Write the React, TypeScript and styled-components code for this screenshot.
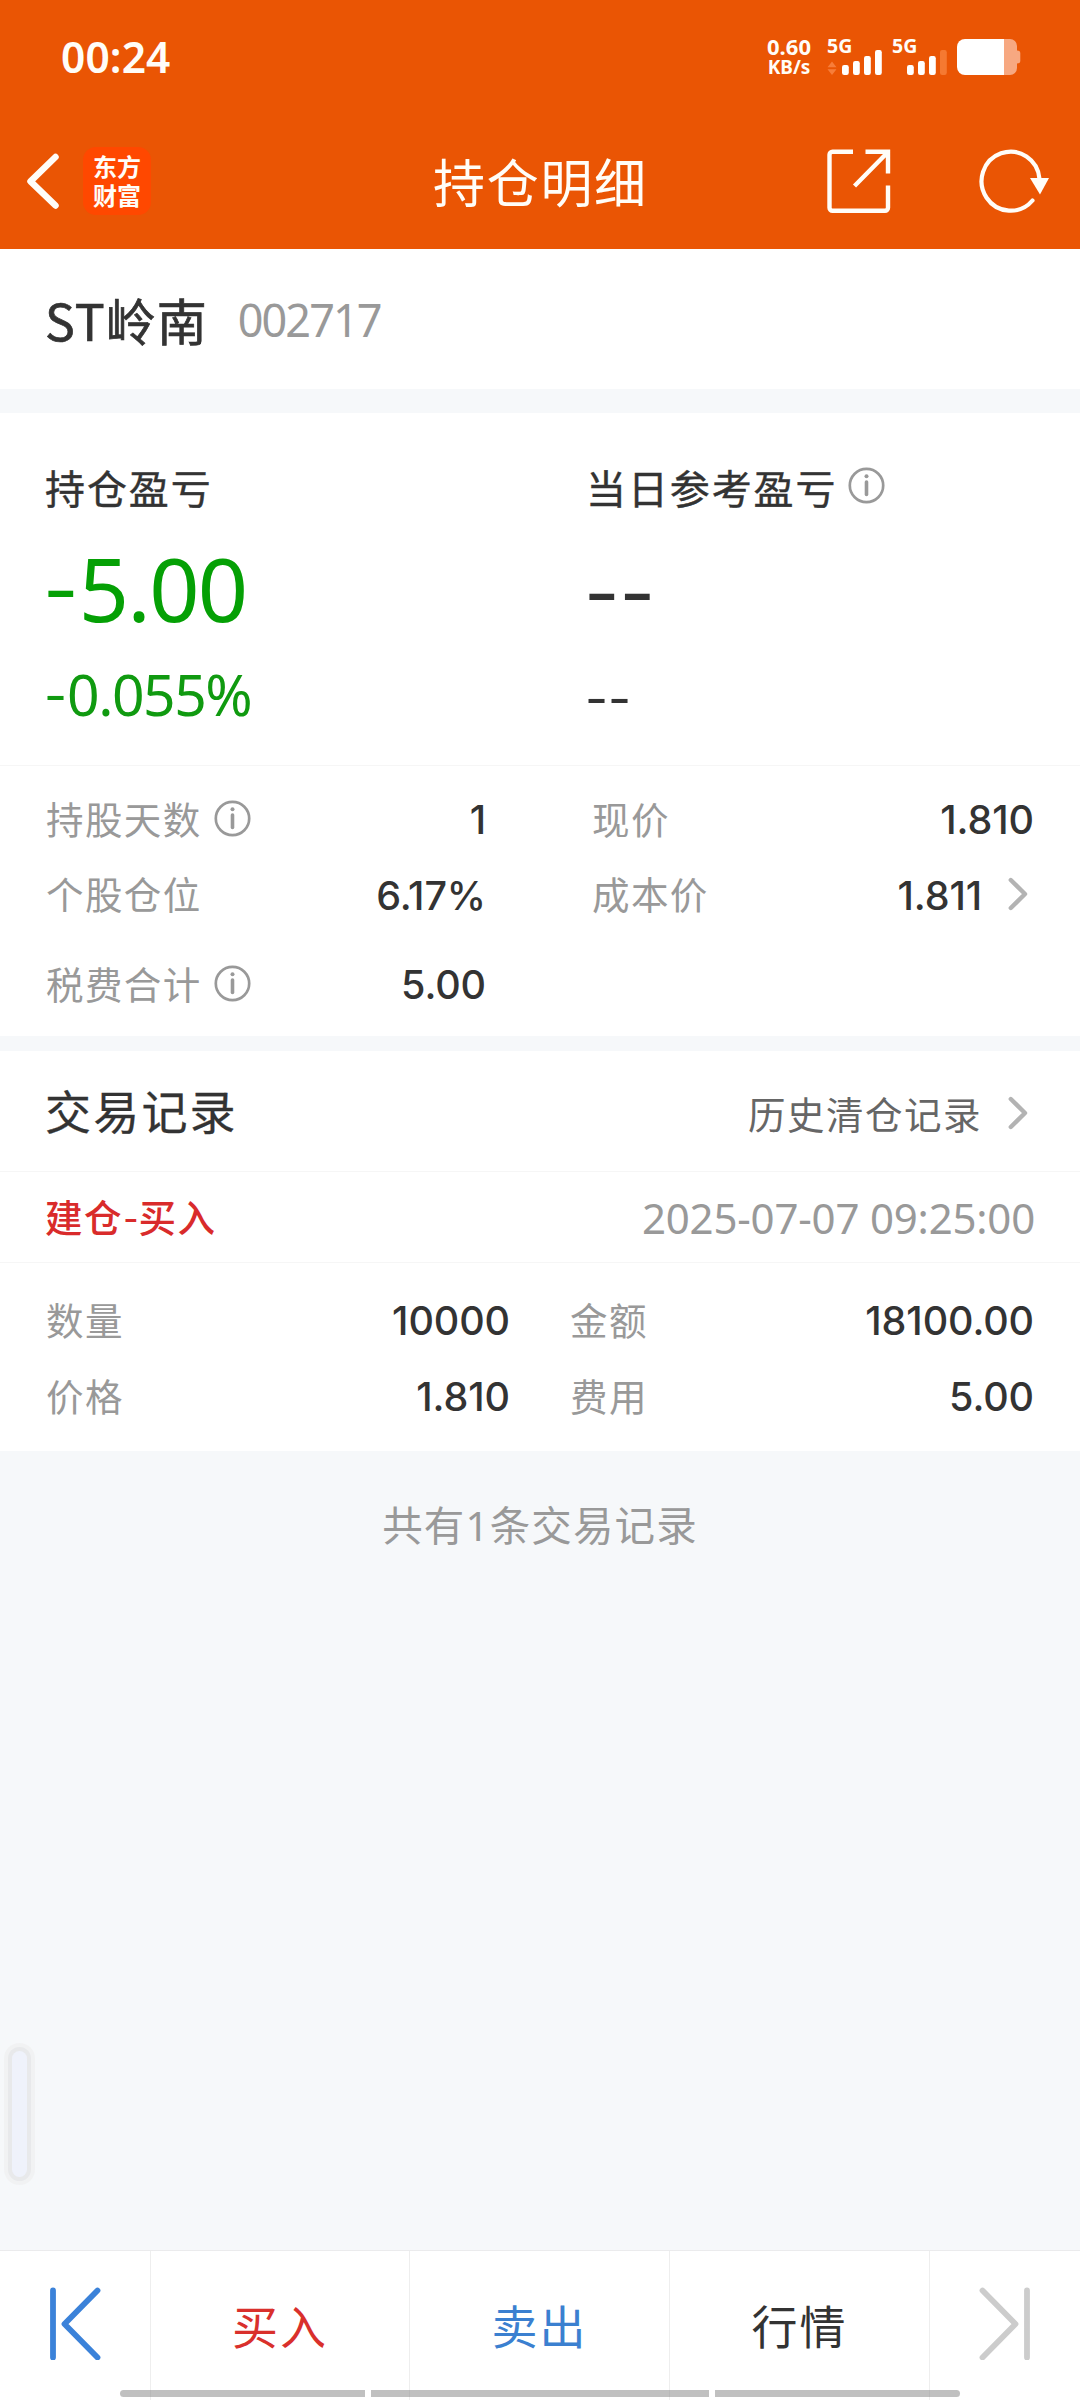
import React from "react";
import styled, { createGlobalStyle } from "styled-components";

const CJK = '"Noto Sans CJK SC", sans-serif';
const NUM = '"Noto Sans", "Noto Sans CJK SC", sans-serif';
const DATA = 'Inter, "Noto Sans CJK SC", sans-serif';

const GlobalStyle = createGlobalStyle`
  *, *::before, *::after { box-sizing: border-box; }
  body { margin: 0; background: #f6f8fa; font-family: ${CJK}; }
  button { border: 0; padding: 0; background: none; font: inherit; color: inherit; }
  svg { display: block; flex: none; }
`;

const Screen = styled.div`
  position: relative;
  display: flex;
  flex-direction: column;
  width: 1080px;
  height: 2400px;
  overflow: hidden;
  background: #f6f8fa;
  color: #333;
  white-space: nowrap;
`;

const Header = styled.header`
  height: 249px;
  background: #ea5504;
  color: #fffdf8;
`;

const StatusBar = styled.div`
  display: flex;
  align-items: center;
  height: 114px;
  padding: 0 59px 0 61px;
`;

const Clock = styled.div`
  flex: 1;
  font: 600 42.5px/60px ${NUM};
  letter-spacing: 0.1px;
  margin-top: -1px;
`;

const NetSpeed = styled.div`
  width: 46px;
  margin-right: 15px;
  text-align: center;
  font-family: ${NUM};
  font-weight: 700;
`;

const SpeedValue = styled.div`
  font-size: 22px;
  line-height: 21px;
  margin-top: -2px;
`;

const SpeedUnit = styled.div`
  font-size: 19px;
  line-height: 20px;
`;

const Signal = styled.div`
  width: 65px;
  height: 36px;
`;

const SignalType = styled.div`
  height: 11px;
  font: 700 19.5px/14px ${NUM};
`;

const NavBar = styled.div`
  display: grid;
  grid-template-columns: 83px 350px 1fr 64px 88px 101px;
  align-items: center;
  height: 134px;
`;

const Badge = styled.div`
  display: flex;
  flex-direction: column;
  align-items: center;
  width: 68px;
  height: 68px;
  padding-top: 4px;
  border-radius: 13px;
  background: #ff4800;
  font: 700 24px/29px ${CJK};
`;

const NavTitle = styled.h1`
  margin: 0;
  font: 400 52px/70px ${CJK};
  letter-spacing: 1.7px;
`;

const StockBar = styled.section`
  display: flex;
  align-items: center;
  height: 140px;
  padding: 0 45px;
  background: #fff;
`;

const StockName = styled.div`
  font: 400 50px/70px ${CJK};
  letter-spacing: 1px;
  -webkit-text-stroke: 0.7px currentColor;
`;

const StockCode = styled.div`
  margin: 2px 0 0 30px;
  color: #999;
  font: 400 45px/70px ${NUM};
  letter-spacing: -1.9px;
`;

const Gap = styled.div<{ $h: number }>`
  height: ${(p) => p.$h}px;
`;

const Hyphen = styled.span`
  font-family: Inter, sans-serif;
  font-size: 0.88em;
  font-feature-settings: "case";
  letter-spacing: 0;
`;

const Profit = styled.section`
  display: grid;
  grid-template-columns: 541px 1fr;
  height: 352px;
  padding: 45px 45px 0;
  background: #fff;
`;

const ProfitLabel = styled.div`
  display: flex;
  align-items: center;
  gap: 11px;
  height: 58px;
  font: 400 40px/58px ${CJK};
  letter-spacing: 1.9px;
  -webkit-text-stroke: 0.4px currentColor;

  svg { margin-bottom: 3px; }
`;

const ProfitAmount = styled.div<{ $down?: boolean }>`
  margin-top: 12px;
  height: 120px;
  padding-top: ${(p) => (p.$down ? 0 : 3)}px;
  font: 400 88px/120px ${NUM};
  letter-spacing: -1.7px;
  color: ${(p) => (p.$down ? "#05a005" : "#333")};
  margin-left: -2px;
`;

const ProfitRate = styled.div<{ $down?: boolean }>`
  margin-top: 6px;
  height: 80px;
  padding-top: ${(p) => (p.$down ? 0 : 3)}px;
  font: 400 57px/80px ${NUM};
  letter-spacing: -1.5px;
  color: ${(p) => (p.$down ? "#109a10" : "#333")};
  margin-left: -1px;
`;

const Details = styled.section`
  display: grid;
  grid-template-columns: 440px 442px;
  grid-template-rows: 76px 75px 104px;
  column-gap: 106px;
  height: 271px;
  padding: 16px 0 0 46px;
  border-top: 1px solid #f6f6f6;
  background: #fff;
`;

const Cell = styled.div`
  display: flex;
  align-items: center;
  justify-content: space-between;
`;

const CellLabel = styled.div`
  display: flex;
  align-items: center;
  gap: 12px;
  padding-bottom: 5px;
  color: #999;
  font: 400 37.5px/56px ${CJK};
  letter-spacing: 1.4px;

  svg { margin-top: 1px; }
`;

const CellValue = styled.div`
  display: flex;
  align-items: center;
  gap: 26px;
  font: 500 39.5px/56px ${DATA};
  letter-spacing: -0.1px;

  svg { margin-bottom: 3px; }
`;

const ListHead = styled.div`
  display: flex;
  align-items: center;
  justify-content: space-between;
  height: 120px;
  padding: 0 52px 0 45px;
  background: #fff;
`;

const ListTitle = styled.h2`
  margin: 0 0 4px;
  font: 400 46px/64px ${CJK};
  letter-spacing: 2.2px;
  -webkit-text-stroke: 0.3px currentColor;
`;

const HistoryLink = styled.button`
  display: flex;
  align-items: center;
  gap: 26px;
  margin-top: 3px;
  color: #666;
  font: 400 37.5px/56px ${CJK};
  letter-spacing: 1.5px;
`;

const RecordHead = styled.div`
  display: flex;
  align-items: center;
  justify-content: space-between;
  height: 91px;
  padding: 0 45px;
  border-top: 1px solid #f6f6f6;
  background: #fff;
`;

const RecordType = styled.div`
  margin-top: 2px;
  color: #d92b2b;
  font: 500 37.5px/56px ${CJK};
  letter-spacing: 1.6px;
`;

const RecordTime = styled.time`
  margin-top: 2px;
  color: #999;
  font: 400 42px/56px ${NUM};
  letter-spacing: -0.2px;
`;

const RecordBody = styled.div`
  display: grid;
  grid-template-columns: 464px 464px;
  grid-template-rows: 76px 76px;
  column-gap: 60px;
  height: 189px;
  padding: 20px 0 0 46px;
  border-top: 1px solid #f6f6f6;
  background: #fff;
`;

const Summary = styled.p`
  margin: 45px 0 0;
  text-align: center;
  color: #999;
  font: 400 40.5px/60px ${NUM};
  letter-spacing: 1.1px;
`;

const SideHandle = styled.div`
  position: absolute;
  left: 12px;
  top: 2051px;
  width: 15px;
  height: 126px;
  border-radius: 8px;
  background: #eff2fb;
  box-shadow: 0 0 0 4px #e8e9eb, 0 0 0 8px #f1f2f3;
`;

const Toolbar = styled.nav`
  display: grid;
  grid-template-columns: 151px 259px 260px 260px 150px;
  height: 150px;
  margin-top: auto;
  border-top: 1px solid #ebebed;
  background: #fff;
`;

const Tool = styled.button<{ $color?: string }>`
  display: flex;
  justify-content: center;
  border-right: 1px solid #eee;
  color: ${(p) => p.$color ?? "#333"};
  font: 400 46px/64px ${CJK};
  letter-spacing: 2px;
  padding-top: 41px;

  &:last-child { border-right: 0; }
`;

const ToolIcon = styled(Tool)`
  padding-top: 35px;
`;

const ScrollHints = styled.div`
  position: absolute;
  left: 120px;
  top: 2390px;
  display: grid;
  grid-template-columns: 245px 338px 245px;
  gap: 6px;
  height: 7px;
`;

const Hint = styled.i`
  background: rgba(130, 130, 130, 0.5);
  &:first-child { border-radius: 4px 0 0 4px; }
  &:last-child { border-radius: 0 4px 4px 0; }
`;

const InfoIcon = () => (
  <svg width="37" height="37" viewBox="0 0 37 37" fill="none" stroke="#999">
    <circle cx="18.5" cy="18.5" r="16.7" strokeWidth="2.7" />
    <circle cx="18.5" cy="9.2" r="2" fill="#999" stroke="none" />
    <path d="M18.5 15v12.5" strokeWidth="3.6" strokeLinecap="round" />
  </svg>
);

const Chevron = () => (
  <svg width="20" height="34" viewBox="0 0 20 34" fill="none" stroke="#b3b3b3" strokeWidth="4.4" strokeLinecap="round" strokeLinejoin="round">
    <path d="M2.8 3 17 17 2.8 31" />
  </svg>
);

const barHeights = [10, 14, 19, 25];

const SignalBars = ({ weak, arrows }: { weak?: boolean; arrows?: boolean }) => (
  <svg width="56" height="25" viewBox="0 0 56 25">
    {arrows && <path d="M0.5 17.2 5 11.5 9.5 17.2zM0.5 19.2 5 25 9.5 19.2z" fill="#f77d3a" />}
    {barHeights.map((h, i) => (
      <rect key={h} x={15 + i * 11} y={25 - h} width="6.8" height={h} rx="2.2" fill={weak && i === 3 ? "#f57931" : "#fff"} />
    ))}
  </svg>
);

const Battery = () => (
  <svg width="64" height="36" viewBox="0 0 64 36">
    <path d="M47 0h6a7 7 0 0 1 7 7v4.500c2 0 3.300.8 3.300 2.500v8c0 1.700-1.300 2.500-3.300 2.500V29a7 7 0 0 1-7 7h-6z" fill="#f7a881" />
    <path d="M8 0h39v36H8a8 8 0 0 1-8-8V8a8 8 0 0 1 8-8z" fill="#fff" />
  </svg>
);

const BackIcon = () => (
  <svg width="83" height="68" viewBox="0 0 83 68" fill="none" stroke="currentColor" strokeWidth="6.5" strokeLinecap="round" strokeLinejoin="round">
    <path d="M55.500 10 30.500 34.300 55.500 58.500" />
  </svg>
);

const ShareIcon = () => (
  <svg width="64" height="64" viewBox="0 0 64 64" fill="none" stroke="currentColor" strokeWidth="4.4">
    <path d="M26 2.700H5.500a3 3 0 0 0-3 3v53a3 3 0 0 0 3 3h52.500a3 3 0 0 0 3-3V36.500" />
    <path d="M38.500 2.700H61V24.500M60 4 27.500 37" />
  </svg>
);

const RefreshIcon = () => (
  <svg width="74" height="66" viewBox="0 0 74 66" fill="none">
    <path d="M60.500 31A29 29.500 0 1 0 53.500 52.500" stroke="currentColor" strokeWidth="4.200" strokeLinecap="round" />
    <path d="M51 30h19L61 46.500z" fill="currentColor" />
  </svg>
);

const EdgeIcon = ({ flip }: { flip?: boolean }) => (
  <svg width="54" height="74" viewBox="0 0 54 74" fill="none" stroke="currentColor" strokeLinecap="round" strokeLinejoin="round" strokeWidth="5.800" transform={flip ? "scale(-1 1)" : undefined}>
    <path d="M5 4.500v67M49.500 4.500 16.500 38l33 33.500" />
  </svg>
);

const positionCells = [
  { label: "持股天数", value: "1", info: true },
  { label: "现价", value: "1.810" },
  { label: "个股仓位", value: "6.17%" },
  { label: "成本价", value: "1.811", link: true },
  { label: "税费合计", value: "5.00", info: true },
];

const recordCells = [
  { label: "数量", value: "10000" },
  { label: "金额", value: "18100.00" },
  { label: "价格", value: "1.810" },
  { label: "费用", value: "5.00" },
];

const LinkValue = styled(CellValue)`
  margin-right: 6px;
`;

export default function App() {
  return (
    <Screen>
      <GlobalStyle />
      <Header>
        <StatusBar>
          <Clock>00:24</Clock>
          <NetSpeed>
            <SpeedValue>0.60</SpeedValue>
            <SpeedUnit>KB/s</SpeedUnit>
          </NetSpeed>
          <Signal>
            <SignalType>5G</SignalType>
            <SignalBars arrows />
          </Signal>
          <Signal>
            <SignalType>5G</SignalType>
            <SignalBars weak />
          </Signal>
          <Battery />
        </StatusBar>
        <NavBar>
          <BackIcon />
          <Badge>
            <span>东方</span>
            <span>财富</span>
          </Badge>
          <NavTitle>持仓明细</NavTitle>
          <ShareIcon />
          <span />
          <RefreshIcon />
        </NavBar>
      </Header>

      <StockBar>
        <StockName>ST岭南</StockName>
        <StockCode>002717</StockCode>
      </StockBar>
      <Gap $h={24} />

      <Profit>
        <div>
          <ProfitLabel>持仓盈亏</ProfitLabel>
          <ProfitAmount $down><Hyphen>-</Hyphen>5.00</ProfitAmount>
          <ProfitRate $down><Hyphen>-</Hyphen>0.055%</ProfitRate>
        </div>
        <div>
          <ProfitLabel>
            当日参考盈亏
            <InfoIcon />
          </ProfitLabel>
          <ProfitAmount><Hyphen>--</Hyphen></ProfitAmount>
          <ProfitRate><Hyphen>--</Hyphen></ProfitRate>
        </div>
      </Profit>

      <Details>
        {positionCells.map((c) => {
          const Value = c.link ? LinkValue : CellValue;
          return (
            <Cell key={c.label}>
              <CellLabel>
                {c.label}
                {c.info && <InfoIcon />}
              </CellLabel>
              <Value>
                {c.value}
                {c.link && <Chevron />}
              </Value>
            </Cell>
          );
        })}
      </Details>
      <Gap $h={15} />

      <ListHead>
        <ListTitle>交易记录</ListTitle>
        <HistoryLink>
          历史清仓记录
          <Chevron />
        </HistoryLink>
      </ListHead>
      <RecordHead>
        <RecordType>建仓<Hyphen>-</Hyphen>买入</RecordType>
        <RecordTime>2025-07-07 09:25:00</RecordTime>
      </RecordHead>
      <RecordBody>
        {recordCells.map((c) => (
          <Cell key={c.label}>
            <CellLabel>{c.label}</CellLabel>
            <CellValue>{c.value}</CellValue>
          </Cell>
        ))}
      </RecordBody>
      <Summary>共有1条交易记录</Summary>

      <SideHandle />
      <Toolbar>
        <ToolIcon $color="#3b82d9">
          <EdgeIcon />
        </ToolIcon>
        <Tool $color="#d9302c">买入</Tool>
        <Tool $color="#3b80d0">卖出</Tool>
        <Tool>行情</Tool>
        <ToolIcon $color="#ccc">
          <EdgeIcon flip />
        </ToolIcon>
      </Toolbar>
      <ScrollHints>
        <Hint />
        <Hint />
        <Hint />
      </ScrollHints>
    </Screen>
  );
}
